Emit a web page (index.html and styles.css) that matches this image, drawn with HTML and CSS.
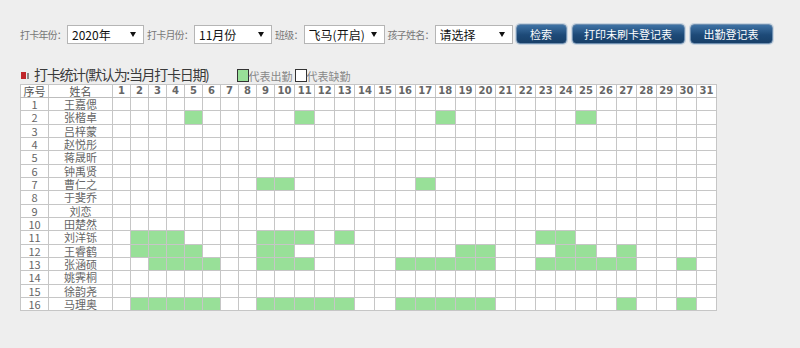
FILE: index.html
```html
<!DOCTYPE html>
<html lang="zh-CN">
<head>
    <meta charset="UTF-8">
    <title>打卡统计</title>
    <link rel="stylesheet" href="styles.css">
</head>
<body>
    <div class="toolbar">
        <label>打卡年份：</label>
        <span class="select w77"><select><option>2020年</option></select></span>
        <label>打卡月份：</label>
        <span class="select w78"><select><option>11月份</option></select></span>
        <label>班级：</label>
        <span class="select w81"><select><option>飞马(开启)</option></select></span>
        <label>孩子姓名：</label>
        <span class="select w78"><select><option>请选择</option></select></span>
        <button class="btn b-search">检索</button>
        <button class="btn b-print">打印未刷卡登记表</button>
        <button class="btn b-att">出勤登记表</button>
    </div>

    <div class="title-row">
        <span class="mark"><i class="red"></i><i class="grey"></i></span>
        <h2>打卡统计(默认为:当月打卡日期)</h2>
        <span class="legend first"><i class="box on"></i>代表出勤</span>
        <span class="legend"><i class="box"></i>代表缺勤</span>
    </div>

    <table class="stat">
        <colgroup id="cols"></colgroup>
        <thead><tr id="head"></tr></thead>
        <tbody id="rows"></tbody>
    </table>

    <script src="app.js"></script>
</body>
</html>
```

FILE: styles.css
```css
body {
    margin: 0;
    padding: 24px 20px 0 20px;
    background: #eeeeee;
    font-family: "Noto Sans CJK SC", "DejaVu Sans", sans-serif;
    font-size: 11px;
    color: #666;
}
.toolbar {
    display: flex;
    align-items: center;
    height: 20px;
}
.toolbar label {
    flex: none;
    white-space: nowrap;
    color: #777;
    font-size: 10px;
    letter-spacing: -0.8px;
    margin-right: 1px;
}
.select {
    flex: none;
    position: relative;
    display: inline-block;
    height: 19px;
    margin-right: 3px;
}
.select select {
    appearance: none;
    -webkit-appearance: none;
    width: 100%;
    height: 19px;
    border: 1px solid #b5b5b5;
    background: #fff;
    font-family: "Noto Sans CJK SC", sans-serif;
    font-size: 12px;
    color: #111;
    padding: 0 0 0 4px;
    border-radius: 0;
    outline: none;
}
.select::after {
    content: "";
    position: absolute;
    right: 8px;
    top: 7px;
    border-left: 3px solid transparent;
    border-right: 3px solid transparent;
    border-top: 5px solid #111;
}
.w77 { width: 77px; }
.w78 { width: 78px; }
.w81 { width: 81px; }
.btn {
    flex: none;
    height: 20px;
    padding: 0;
    margin-right: 5px;
    border: 1px solid #6f8fb0;
    border-radius: 4px;
    background: linear-gradient(#3f72a4, #1d4a78 55%, #183f68);
    color: #fff;
    font-family: "Noto Sans CJK SC", sans-serif;
    font-size: 11px;
    line-height: 18px;
    box-shadow: 0 0 0 1px #c8d4e0;
}
.b-search { width: 51px; }
.b-print { width: 113px; }
.b-att { width: 83px; }

.title-row {
    display: flex;
    align-items: flex-end;
    margin-top: 20px;
    height: 20px;
}
.mark {
    display: flex;
    align-items: flex-end;
    margin: 0 5px 5px 1px;
}
.mark .red {
    width: 5px;
    height: 7px;
    background: #c0262b;
}
.mark .grey {
    width: 2px;
    height: 6px;
    margin-left: 1px;
    background: #888;
}
.title-row h2 {
    margin: 0;
    font-size: 14px;
    font-weight: normal;
    color: #3a3a3a;
    line-height: 20px;
    letter-spacing: -1.3px;
}
.legend {
    display: flex;
    align-items: flex-end;
    color: #888;
    font-size: 11px;
    line-height: 12px;
    margin-bottom: 2px;
}
.legend.first { margin-left: 28px; }
.legend + .legend { margin-left: 2px; }
.box {
    display: inline-block;
    width: 10px;
    height: 11px;
    border: 1px solid #333;
    background: #fff;
}
.box.on { background: #98e098; }

table.stat {
    border-collapse: collapse;
    table-layout: fixed;
    background: #fff;
    width: 697px;
}
.stat th, .stat td {
    border: 1px solid #c6c6c6;
    padding: 0;
    text-align: center;
    overflow: hidden;
    white-space: nowrap;
}
.stat th {
    height: 12px;
    line-height: 12px;
    font-size: 11px;
    font-weight: normal;
    color: #555;
    border-bottom: 1px solid #bdbdbd;
}
.stat th.day {
    font-family: "DejaVu Sans", sans-serif;
    font-weight: bold;
    font-size: 10px;
    color: #666;
}
.stat tbody tr {
    height: 13.33px;
}
.stat td {
    font-size: 11px;
    line-height: 12px;
    color: #666;
}
.stat td.on {
    background: #98e098;
}
```

FILE: app.js
```js
var names = ['王嘉偲', '张楷卓', '吕梓蒙', '赵悦彤', '蒋晟昕', '钟禹贤', '曹仁之', '于斐乔',
    '刘恋', '田楚然', '刘洋铄', '王睿鹤', '张涵硕', '姚霁桐', '徐韵尧', '马理奥'];

// 出勤日期
var days = {
    2: [5, 11, 18, 25],
    7: [9, 10, 17],
    11: [2, 3, 4, 9, 10, 11, 13, 23, 24],
    12: [2, 3, 4, 5, 9, 10, 19, 20, 24, 25, 27],
    13: [3, 4, 5, 6, 9, 10, 11, 16, 17, 18, 19, 20, 23, 24, 25, 26, 27, 30],
    16: [2, 3, 4, 5, 6, 9, 10, 11, 12, 13, 16, 17, 18, 19, 20, 27, 30]
};

var cols = document.getElementById('cols');
var head = document.getElementById('head');
var html = '<col style="width:28px"><col style="width:64px">';
var th = '<th>序号</th><th>姓名</th>';
for (var d = 1; d <= 31; d++) {
    html += '<col style="width:' + (d < 10 ? 18 : 20.1) + 'px">';
    th += '<th class="day">' + d + '</th>';
}
cols.innerHTML = html;
head.innerHTML = th;

var rows = '';
names.forEach(function (name, i) {
    var on = days[i + 1] || [];
    rows += '<tr><td>' + (i + 1) + '</td><td>' + name + '</td>';
    for (var d = 1; d <= 31; d++) {
        rows += '<td' + (on.indexOf(d) > -1 ? ' class="on"' : '') + '></td>';
    }
    rows += '</tr>';
});
document.getElementById('rows').innerHTML = rows;
```
